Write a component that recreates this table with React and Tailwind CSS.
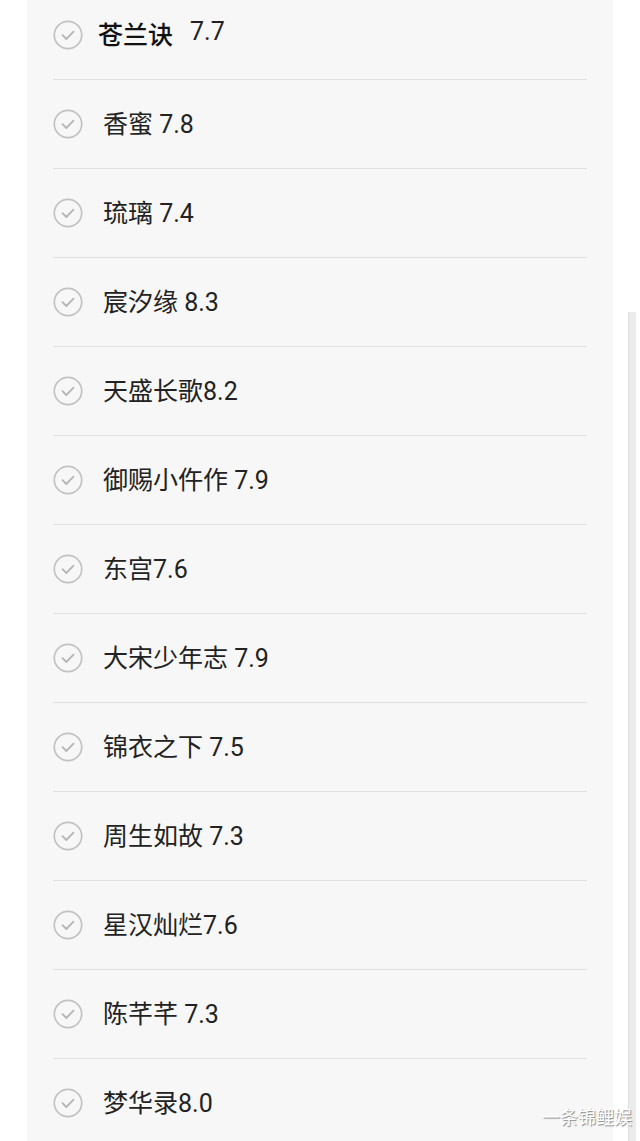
import React from 'react'

const items = [
  { name: '苍兰诀', score: '7.7', gap: true },
  { name: '香蜜', score: ' 7.8' },
  { name: '琉璃', score: ' 7.4' },
  { name: '宸汐缘', score: ' 8.3' },
  { name: '天盛长歌', score: '8.2' },
  { name: '御赐小仵作', score: ' 7.9' },
  { name: '东宫', score: '7.6' },
  { name: '大宋少年志', score: ' 7.9' },
  { name: '锦衣之下', score: ' 7.5' },
  { name: '周生如故', score: ' 7.3' },
  { name: '星汉灿烂', score: '7.6' },
  { name: '陈芊芊', score: ' 7.3' },
  { name: '梦华录', score: '8.0' },
]

function CheckCircle() {
  return (
    <svg width="30" height="30" viewBox="0 0 30 30" fill="none">
      <circle cx="15" cy="15" r="13.7" stroke="#c2c2c2" strokeWidth="1.7" />
      <path d="M9.5 15.2l3.8 3.8 7.2-7.4" stroke="#b5b5b5" strokeWidth="1.8" strokeLinecap="round" strokeLinejoin="round" />
    </svg>
  )
}

export default function App() {
  return (
    <div
      className="relative w-[640px] h-[1141px] overflow-hidden bg-white flex"
      style={{ fontFamily: 'Roboto, "Noto Sans CJK SC", "Noto Sans", sans-serif' }}
    >
      <div className="ml-[27px] w-[586px] h-full bg-[#f7f7f7] px-[26px]">
        <div className="-mt-[9px]">
          {items.map((item, i) => (
            <div key={i}>
              <div className="h-[88px] flex items-center">
                <CheckCircle />
                {item.gap ? (
                  <div className="ml-[15px] flex items-center text-[25px] text-[#111] leading-none">
                    <span className="font-medium">{item.name}</span>
                    <span className="ml-[17px] -mt-[8px] text-[#222]">{item.score}</span>
                  </div>
                ) : (
                  <div className="ml-[20px] text-[25px] text-[#222] leading-none whitespace-pre">
                    {item.name}{item.score}
                  </div>
                )}
              </div>
              {i < items.length - 1 && <div className="h-px bg-[#e0e0e0]" />}
            </div>
          ))}
        </div>
      </div>
      <div className="ml-[15px] mt-[312px] w-[8px] h-[829px] bg-[#ececec] border-l border-[#dcdcdc]" />
      <div
        className="absolute right-[8px] bottom-[14px] text-[18px] text-white leading-none"
        style={{ textShadow: '1px 1px 1px #888' }}
      >
        一条锦鲤娱
      </div>
    </div>
  )
}
